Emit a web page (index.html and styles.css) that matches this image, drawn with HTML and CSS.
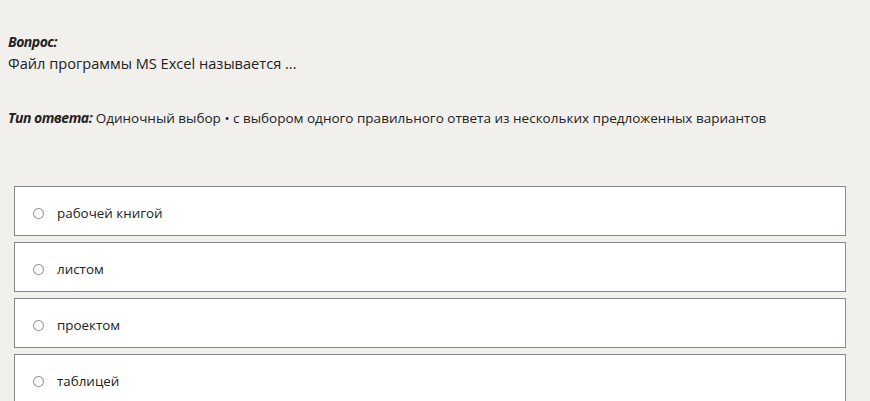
FILE: index.html
```html
<!DOCTYPE html>
<html lang="ru">
<head>
    <meta charset="UTF-8">
    <title>Вопрос</title>
    <link rel="stylesheet" href="styles.css">
</head>
<body>
    <div class="question">
        <div class="label">Вопрос:</div>
        <div class="question-text">Файл программы MS Excel называется ...</div>
    </div>
    <div class="answer-type">
        <span class="label">Тип ответа:</span> Одиночный выбор • с выбором одного правильного ответа из нескольких предложенных вариантов
    </div>
    <div class="options">
        <label class="option"><span class="radio"></span>рабочей книгой</label>
        <label class="option"><span class="radio"></span>листом</label>
        <label class="option"><span class="radio"></span>проектом</label>
        <label class="option"><span class="radio"></span>таблицей</label>
    </div>
</body>
</html>
```

FILE: styles.css
```css
body {
    margin: 0;
    padding: 32px 8px 0;
    background: #f2f0ed;
    color: #222;
    font-family: "Open Sans", "Noto Sans", sans-serif;
}

.label {
    font-weight: bold;
    font-style: italic;
    font-size: 14px;
    letter-spacing: -0.5px;
}

.question-text {
    font-size: 14.6px;
    margin-top: 2px;
}

.answer-type {
    margin-top: 35px;
    font-size: 13.5px;
}

.options {
    margin: 59px 16px 0 6px;
    display: flex;
    flex-direction: column;
    gap: 6px;
}

.option {
    box-sizing: border-box;
    display: flex;
    align-items: center;
    height: 50px;
    padding: 4px 0 0 18px;
    background: #fff;
    border: 1px solid #888;
    font-size: 13.4px;
}

.radio {
    width: 9px;
    height: 9px;
    border: 1px solid #8a8a8a;
    border-radius: 50%;
    margin-right: 13px;
}
```
